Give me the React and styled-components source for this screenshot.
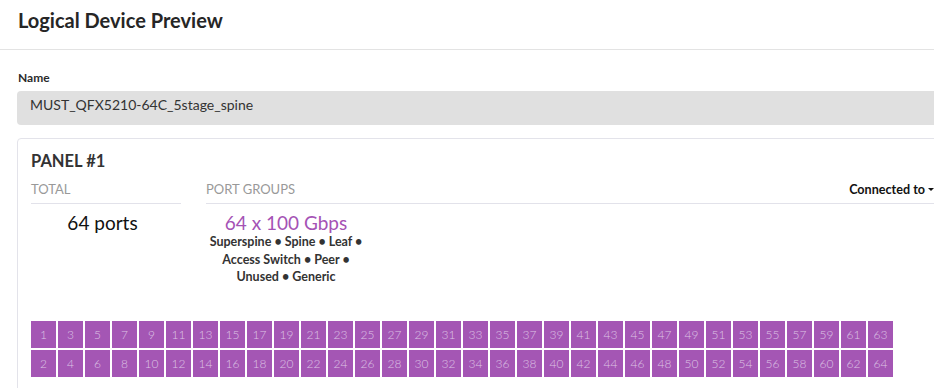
import React from "react";
import styled, { createGlobalStyle } from "styled-components";

const GlobalStyle = createGlobalStyle`
  html, body {
    margin: 0;
    padding: 0;
    background: #ffffff;
    overflow: hidden;
  }
  body {
    font-family: Lato, "Open Sans", "Liberation Sans", sans-serif;
    color: #333333;
  }
  * { box-sizing: border-box; }
`;

const Page = styled.div`
  width: 100%;
`;

const Header = styled.header`
  height: 50px;
  padding: 8px 18px 0;
  border-bottom: 1px solid #e3e3e3;
`;

const Title = styled.h1`
  margin: 0;
  font-size: 20px;
  line-height: 24px;
  font-weight: 700;
  color: #262626;
`;

const Body = styled.div`
  padding: 20px 0 0 17px;
  margin-right: -14px;
`;

const Label = styled.label`
  display: block;
  font-size: 12px;
  line-height: 15px;
  font-weight: 700;
  color: #2b2b2b;
  padding-left: 1px;
  margin-bottom: 6px;
`;

const NameField = styled.div`
  height: 34px;
  border-radius: 4px;
  background: #e0e0e0;
  padding: 4px 13px 0;
  font-size: 14px;
  line-height: 20px;
  color: #333333;
`;

const Card = styled.section`
  margin-top: 13px;
  border: 1px solid #e3e3ea;
  border-radius: 4px;
  padding: 13px 13px 40px;
`;

const PanelTitle = styled.h2`
  margin: 0 0 11px;
  font-size: 16.5px;
  line-height: 19px;
  font-weight: 700;
  color: #333333;
`;

const Grid = styled.div`
  display: grid;
  grid-template-columns: 150px 160px 1fr;
  column-gap: 25px;
`;

const HeadCell = styled.div`
  grid-column: ${(p) => p.$span || "auto"};
  display: flex;
  justify-content: space-between;
  align-items: flex-end;
  padding-bottom: 6px;
  border-bottom: 1px solid #e2e2ea;
  font-size: 13px;
  line-height: 15px;
  color: #999999;
  text-transform: uppercase;
`;

const Dropdown = styled.span`
  display: inline-flex;
  align-items: center;
  gap: 3px;
  font-size: 12.6px;
  font-weight: 700;
  color: #111111;
  text-transform: none;
  cursor: pointer;
`;

const Caret = styled.span`
  width: 0;
  height: 0;
  border-left: 3px solid transparent;
  border-right: 3px solid transparent;
  border-top: 3px solid #111111;
`;

const ValueCell = styled.div`
  padding: 8px ${(p) => p.$shift || 0}px 0 0;
  text-align: center;
`;

const BigValue = styled.div`
  font-size: 19px;
  line-height: 21px;
  color: ${(p) => p.$color || "#111111"};
`;

const Roles = styled.div`
  font-size: 12.5px;
  line-height: 17.5px;
  font-weight: 700;
  color: #333333;
`;

const Ports = styled.div`
  margin-top: 35px;
  display: grid;
  grid-template-rows: repeat(2, 27px);
  grid-auto-flow: column;
  grid-auto-columns: 25px;
  gap: 2px;
`;

const Port = styled.div`
  background: #a456b4;
  color: #dcc3e4;
  font-size: 12px;
  font-weight: 300;
  display: flex;
  align-items: center;
  justify-content: center;
`;

export default function App() {
  const ports = Array.from({ length: 64 }, (_, i) => i + 1);
  return (
    <Page>
      <GlobalStyle />
      <Header>
        <Title>Logical Device Preview</Title>
      </Header>
      <Body>
        <Label>Name</Label>
        <NameField>MUST_QFX5210-64C_5stage_spine</NameField>
        <Card>
          <PanelTitle>PANEL #1</PanelTitle>
          <Grid>
            <HeadCell>Total</HeadCell>
            <HeadCell $span="2 / 4">
              <span>Port Groups</span>
              <Dropdown>
                Connected to <Caret />
              </Dropdown>
            </HeadCell>
            <ValueCell $shift={7}>
              <BigValue>64 ports</BigValue>
            </ValueCell>
            <ValueCell>
              <BigValue $color="#a552b5">64 x 100 Gbps</BigValue>
              <Roles>
                Superspine • Spine • Leaf •<br />
                Access Switch • Peer •<br />
                Unused • Generic
              </Roles>
            </ValueCell>
          </Grid>
          <Ports>
            {ports.map((n) => (
              <Port key={n}>{n}</Port>
            ))}
          </Ports>
        </Card>
      </Body>
    </Page>
  );
}
